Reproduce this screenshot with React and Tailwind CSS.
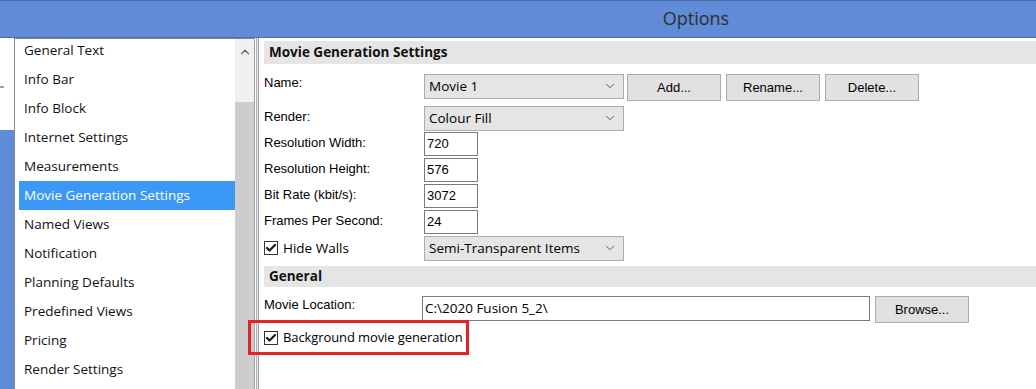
import { Check, ChevronDown, ChevronUp } from 'lucide-react'

const segoe = { fontFamily: '"Open Sans", "Noto Sans", sans-serif' }

const items = [
  'General Text',
  'Info Bar',
  'Info Block',
  'Internet Settings',
  'Measurements',
  'Movie Generation Settings',
  'Named Views',
  'Notification',
  'Planning Defaults',
  'Predefined Views',
  'Pricing',
  'Render Settings',
]

function Select({ value, width = 'w-[200px]' }) {
  return (
    <div className={`${width} h-[25px] border border-[#acacac] bg-[#e5e5e5] flex items-center justify-between pl-[4px] pr-[6px] text-[13.5px] text-black`} style={segoe}>
      <span>{value}</span>
      <ChevronDown size={14} strokeWidth={1.6} className="text-[#555]" />
    </div>
  )
}

function Button({ children }) {
  return (
    <div className="w-[94px] h-[27px] border border-[#acacac] bg-[#e1e1e1] flex items-center justify-center text-[13px] text-black font-['Liberation_Sans',Arial,sans-serif]">
      {children}
    </div>
  )
}

function TextBox({ value }) {
  return (
    <div className="w-[54px] h-[24px] border border-[#7a7a7a] bg-white flex items-center px-[2px] text-[13px] text-black font-['Liberation_Sans',Arial,sans-serif]">
      {value}
    </div>
  )
}

function CheckBox() {
  return (
    <div className="w-[14px] h-[14px] border border-[#333] bg-white flex items-center justify-center">
      <Check size={12} strokeWidth={4.5} className="text-[#1a1a1a]" />
    </div>
  )
}

function Field({ label, children }) {
  return (
    <div className="flex items-center h-[26px]">
      <div className="w-[160px] text-[13px] text-black font-['Liberation_Sans',Arial,sans-serif] -mt-[3px]">{label}</div>
      {children}
    </div>
  )
}

function Header({ children }) {
  return (
    <div className="h-[21px] bg-[#e5e5e5] flex items-center pl-[5px] text-[13.5px] font-bold text-[#111]" style={segoe}>
      {children}
    </div>
  )
}

export default function App() {
  return (
    <div className="w-[1036px] h-[389px] overflow-hidden bg-white flex flex-col">
      <div className="h-[38px] shrink-0 bg-[#608bd6] border-t border-[#4a6db0] border-b border-b-[#4a6fb3] flex items-center justify-center">
        <span className="text-[18px] text-[#2f2f2f] ml-[356px] -mt-[2px]" style={segoe}>Options</span>
      </div>
      <div className="flex flex-1 min-h-0">
        <div className="w-[14px] flex flex-col">
          <div className="h-[50px] bg-white border-b-2 border-[#a0a0a0] w-[4px]" />
          <div className="flex-1 bg-white" />
          <div className="h-[259px] bg-[#608bd6]" />
        </div>
        <div className="w-[240px] border-l border-t border-[#828790] flex bg-white">
          <div className="flex-1 overflow-hidden pl-[4px]">
            <div className="-mt-[3px]">
              {items.map(it => (
                <div
                  key={it}
                  className={`h-[29px] flex items-center pl-[5px] text-[13.5px] whitespace-nowrap ${it === 'Movie Generation Settings' ? 'bg-[#3b98f5] text-white' : 'text-[#111]'}`}
                  style={segoe}
                >
                  {it}
                </div>
              ))}
            </div>
          </div>
          <div className="w-[19px] flex flex-col bg-[#f0f0f0]">
            <div className="h-[25px] flex items-center justify-center">
              <ChevronUp size={14} strokeWidth={2} className="text-[#606060]" />
            </div>
            <div className="h-[38px]" />
            <div className="flex-1 bg-[#cdcdcd]" />
          </div>
        </div>
        <div className="w-[5px] flex">
          <div className="w-[1px] bg-[#a0a0a0]" />
          <div className="w-[1px] bg-white" />
          <div className="w-[1px] bg-[#b4b4b4]" />
          <div className="w-[1px] bg-[#e8e8e8]" />
          <div className="w-[1px] bg-[#a0a0a0]" />
        </div>
        <div className="flex-1 pl-[5px] pt-[3px] flex flex-col">
          <div className="h-[23px] bg-[#e5e5e5] flex items-center pl-[5px] text-[13.5px] font-bold text-[#111]" style={segoe}>
            Movie Generation Settings
          </div>
          <div className="flex items-center h-[26px] mt-[9px]">
            <div className="w-[160px] text-[13px] text-black font-['Liberation_Sans',Arial,sans-serif] -mt-[7px]">Name:</div>
            <Select value="Movie 1" />
            <div className="flex gap-[5px] ml-[3px] mt-[3px]">
              <Button>Add...</Button>
              <Button>Rename...</Button>
              <Button>Delete...</Button>
            </div>
          </div>
          <div className="flex flex-col mt-[6px]">
            <Field label="Render:"><Select value="Colour Fill" /></Field>
            <Field label="Resolution Width:"><TextBox value="720" /></Field>
            <Field label="Resolution Height:"><TextBox value="576" /></Field>
            <Field label="Bit Rate (kbit/s):"><TextBox value="3072" /></Field>
            <Field label="Frames Per Second:"><TextBox value="24" /></Field>
            <div className="flex items-center h-[26px]">
              <div className="w-[160px] flex items-center gap-[5px]">
                <CheckBox />
                <span className="text-[13.5px] text-black whitespace-nowrap" style={segoe}>Hide Walls</span>
              </div>
              <Select value="Semi-Transparent Items" />
            </div>
          </div>
          <div className="mt-[5px]">
            <Header>General</Header>
          </div>
          <div className="flex items-center h-[26px] mt-[8px]">
            <div className="w-[158px] text-[13px] text-black font-['Liberation_Sans',Arial,sans-serif] -mt-[7px]">Movie Location:</div>
            <div className="w-[448px] h-[25px] border border-[#7a7a7a] bg-white flex items-center px-[2px] text-[13.5px] text-black" style={segoe}>
              C:\2020 Fusion 5_2\
            </div>
            <div className="ml-[5px] mt-[3px]">
              <Button>Browse...</Button>
            </div>
          </div>
          <div className="-ml-[16px] -mt-[1px] w-[221px] h-[35px] border-[3px] border-[#e8202a] flex items-center pl-[13px] gap-[5px]">
            <CheckBox />
            <span className="text-[13px] text-black whitespace-nowrap tracking-[-0.1px]" style={segoe}>Background movie generation</span>
          </div>
        </div>
      </div>
    </div>
  )
}
